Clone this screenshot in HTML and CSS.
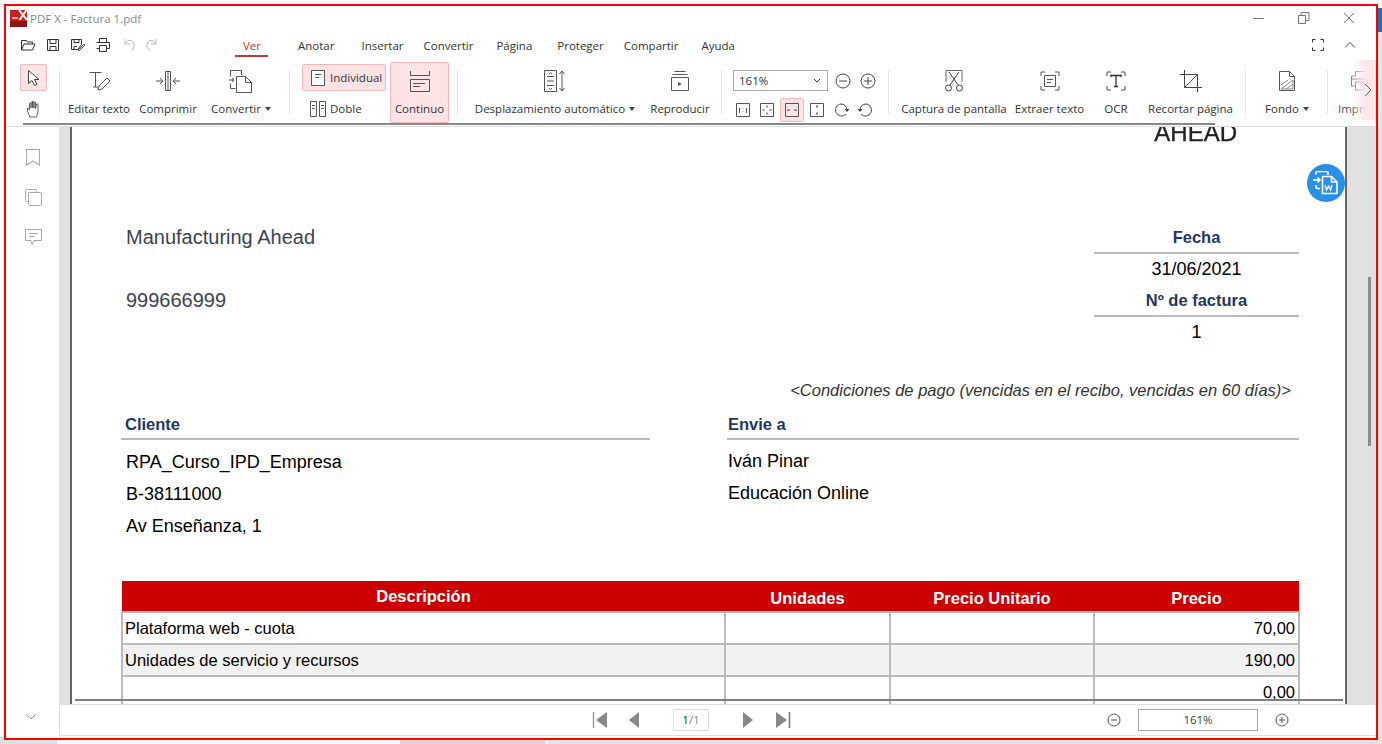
FILE: index.html
```html
<!DOCTYPE html>
<html lang="es">
<head>
  <meta charset="utf-8">
  <title>PDF X - Factura 1.pdf</title>
  <link rel="stylesheet" href="styles.css">
</head>
<body>
  <!-- desktop behind the window -->
  <div class="desk-blue"></div>
  <div class="desk-right"></div>
  <div class="desk-bottom">
    <div class="desk-white"></div>
    <div class="desk-pink"></div>
    <div class="desk-grey"></div>
    <div class="desk-rose"></div>
  </div>

  <div class="window">
    <div class="titlebar">
      <svg class="app-logo" width="17" height="17" viewBox="0 0 17 17">
        <rect width="17" height="17" fill="#c62020"/>
        <rect y="11" width="17" height="6" fill="#8e1212"/>
        <path d="M9 0l8 10M16.500 0l-7 10" stroke="#fff" stroke-width="2" fill="none"/>
        <path d="M2 8h6" stroke="#fff" stroke-width="1.200"/>
      </svg>
      <span class="app-title">PDF X - Factura 1.pdf</span>
      <div class="win-btns">
        <svg width="12" height="12" viewBox="0 0 12 12"><path d="M0 6.500h11" stroke="#777"/></svg>
        <svg width="12" height="12" viewBox="0 0 12 12"><path d="M.5 3.500h7v8h-7zM3 3.500V.5h8v8H7.500" stroke="#777" fill="none"/></svg>
        <svg width="12" height="12" viewBox="0 0 12 12"><path d="M1 1l10 10M11 1L1 11" stroke="#777" fill="none"/></svg>
      </div>
    </div>

    <div class="tabrow">
      <div class="quick">
        <svg width="16" height="16" viewBox="0 0 16 16"><path d="M1.500 13V3.500h5l1 1.500h5v2M1.500 13l2.500-6h11l-2.500 6z" stroke="#333" fill="#fff"/></svg>
        <svg width="16" height="16" viewBox="0 0 16 16"><path d="M2.500 2.500h11v11h-11zM5 2.500v4h6v-4M5 13.500v-4h6v4" stroke="#333" fill="none"/></svg>
        <svg width="16" height="16" viewBox="0 0 16 16"><path d="M1.500 2.500h10v5l-4 5h-6zM4 2.500v3h5v-3M4 12.500v-3h3" stroke="#333" fill="none"/><path d="M8 13l6-6 1 1-6 6z" stroke="#1a6fb5" fill="#e8c27a"/></svg>
        <svg width="16" height="16" viewBox="0 0 16 16"><path d="M4.500 5V1.500h7V5M1.500 5.500h13v6h-3M4.500 11.500h-3M4.500 8.500h7v6h-7z" stroke="#333" fill="none"/></svg>
        <svg width="16" height="16" viewBox="0 0 16 16"><path d="M5 2v5h5M5 7l3-3.500a5 5 0 013 9.500" stroke="#bbb" fill="none"/></svg>
        <svg width="16" height="16" viewBox="0 0 16 16"><path d="M11 2v5H6M11 7L8 3.500a5 5 0 00-3 9.500" stroke="#bbb" fill="none"/></svg>
      </div>
      <nav class="tabs">
        <span class="tab tab-active">Ver</span>
        <span class="tab">Anotar</span>
        <span class="tab">Insertar</span>
        <span class="tab">Convertir</span>
        <span class="tab">Página</span>
        <span class="tab">Proteger</span>
        <span class="tab">Compartir</span>
        <span class="tab">Ayuda</span>
      </nav>
      <div class="tab-end">
        <svg width="14" height="14" viewBox="0 0 14 14"><path d="M1.500 4.500v-3h3M9.500 1.500h3v3M12.500 9.500v3h-3M4.500 12.500h-3v-3" stroke="#333" fill="none"/></svg>
        <svg width="12" height="12" viewBox="0 0 12 12"><path d="M1 8.500l5-5 5 5" stroke="#444" fill="none"/></svg>
      </div>
    </div>

    <div class="toolbar">
      <div class="sel-col">
        <div class="sel-btn on">
          <svg width="16" height="18" viewBox="0 0 16 18"><path d="M2.500 1.500v13l3.500-3 2.500 5 2.500-1-2.500-5h4.500z" stroke="#444" fill="#fff"/></svg>
        </div>
        <div class="sel-btn">
          <svg width="16" height="18" viewBox="0 0 16 18"><path d="M4 17l-2.500-6V8l2 2V3.500h1.500V8 2h1.500v6-6.500H8V8 2.500h1.500V9l1-5H12v8l-1.500 5z" stroke="#555" fill="#fff" stroke-width=".9"/></svg>
        </div>
      </div>
      <div class="sep sep-a"></div>

      <div class="tool t-edit">
        <svg width="24" height="24" viewBox="0 0 24 24"><path d="M2.500 3.500h12M8.500 3.500V18M6 18h5" stroke="#555" fill="none"/><path d="M11 21l1-4 8-8 3 3-8 8z" stroke="#555" fill="#fff"/></svg>
        <span>Editar texto</span>
      </div>
      <div class="tool t-comp">
        <svg width="26" height="24" viewBox="0 0 26 24"><path d="M10.500 2.500h5v19h-5zM13 2.500v19" stroke="#555" fill="none"/><path d="M1 12h7M5 9l3 3-3 3M25 12h-7M21 9l-3 3 3 3" stroke="#555" fill="none"/></svg>
        <span>Comprimir</span>
      </div>
      <div class="tool t-conv">
        <svg width="24" height="24" viewBox="0 0 24 24"><path d="M1.500 7.500v-6h11v5M1.500 14.500v5h5" stroke="#555" fill="none"/><path d="M7.500 7.500h9l6 6v10h-15zM16.500 7.500v6h6M0 11h5M3 9l2 2-2 2" stroke="#555" fill="#fff"/></svg>
        <span>Convertir <i class="caret"></i></span>
      </div>
      <div class="sep sep-b"></div>

      <div class="view-col">
        <div class="view-btn on">
          <svg class="page-one" width="14" height="16" viewBox="0 0 14 16"><path d="M.5.5h13v15H.5zM4 4.500h6M4 7.500h4" stroke="#555" fill="#fff"/></svg>
          <span>Individual</span>
        </div>
        <div class="view-btn">
          <svg width="16" height="16" viewBox="0 0 16 16"><path d="M.5.5h6v15h-6zM9.500.5h6v15h-6zM2 4.500h3M2 7.500h3M11 4.500h3M11 7.500h3" stroke="#555" fill="#fff"/></svg>
          <span>Doble</span>
        </div>
      </div>
      <div class="tool t-cont on">
        <svg width="22" height="22" viewBox="0 0 22 22"><path d="M1.500 0v4.500h19V0M1.500 8.500h19v12h-19zM4 12.500h12M4 15.500h7" stroke="#555" fill="none"/></svg>
        <span>Continuo</span>
      </div>
      <div class="sep sep-c"></div>

      <div class="tool t-auto">
        <svg width="24" height="24" viewBox="0 0 24 24"><path d="M1.500 1.500h12v21h-12zM4 7.500h7M4 12h7M4 16.500h7M6 5l1.500-1.500L9 5M6 19l1.500 1.500L9 19M19 2v20M16.500 5L19 2l2.500 3M16.500 19l2.500 3 2.500-3" stroke="#555" fill="none"/></svg>
        <span>Desplazamiento automático <i class="caret"></i></span>
      </div>
      <div class="tool t-play">
        <svg width="20" height="22" viewBox="0 0 20 22"><path d="M4.500 1.500h11M2.500 4.500h15M1.500 7.500h17v13h-17z" stroke="#555" fill="none"/><path d="M8 12l4 2-4 2z" fill="#555"/></svg>
        <span>Reproducir</span>
      </div>
      <div class="sep sep-d"></div>

      <div class="zoom-col">
        <div class="zoom-top">
          <div class="zoom-select"><span>161%</span>
            <svg width="8" height="6" viewBox="0 0 8 6"><path d="M1 1l3 3 3-3" stroke="#333" fill="none"/></svg>
          </div>
          <svg width="16" height="16" viewBox="0 0 16 16"><circle cx="8" cy="8" r="7" stroke="#444" fill="none"/><path d="M4 8h8" stroke="#444"/></svg>
          <svg width="16" height="16" viewBox="0 0 16 16"><circle cx="8" cy="8" r="7" stroke="#444" fill="none"/><path d="M4 8h8M8 4v8" stroke="#444"/></svg>
        </div>
        <div class="zoom-bottom">
          <div class="mini"><svg width="14" height="14" viewBox="0 0 14 14"><path d="M.5.5h13v13H.5zM3.500 5v5M10.500 5v5M7 5.500v.5M7 8.500v.5" stroke="#555" fill="none"/></svg></div>
          <div class="mini"><svg width="14" height="14" viewBox="0 0 14 14"><path d="M.5.5h13v13H.5z" stroke="#555" fill="none"/><path d="M6 2.500h2v2H6zM2.500 6h2v2h-2zM9.500 6h2v2h-2zM6 9.500h2v2H6z" fill="#999"/></svg></div>
          <div class="mini on"><svg width="14" height="14" viewBox="0 0 14 14"><path d="M.5.5h13v13H.5z" stroke="#555" fill="none"/><path d="M2.500 6h2v2h-2zM9.500 6h2v2h-2z" fill="#777"/></svg></div>
          <div class="mini"><svg width="14" height="14" viewBox="0 0 14 14"><path d="M.5.5h13v13H.5z" stroke="#555" fill="none"/><path d="M6 2.500h2v2H6zM6 9.500h2v2H6z" fill="#777"/></svg></div>
          <div class="mini"><svg width="16" height="16" viewBox="0 0 16 16"><path d="M13 12A6 6 0 118 2a6 6 0 016 6" stroke="#444" fill="none"/><path d="M11.500 7h5L14 10z" fill="#444"/></svg></div>
          <div class="mini"><svg width="16" height="16" viewBox="0 0 16 16"><path d="M3 12a6 6 0 105-10 6 6 0 00-6 6" stroke="#444" fill="none"/><path d="M-.5 7h5L2 10z" fill="#444"/></svg></div>
        </div>
      </div>
      <div class="sep sep-e"></div>

      <div class="tool t-shot">
        <svg width="24" height="24" viewBox="0 0 24 24"><path d="M4 13V1.500h16V13" stroke="#666" fill="none"/><path d="M7 3l9 13M17 3L8 16" stroke="#444" fill="none"/><circle cx="6.500" cy="19" r="3" stroke="#444" fill="#fff"/><circle cx="17.500" cy="19" r="3" stroke="#444" fill="#fff"/></svg>
        <span>Captura de pantalla</span>
      </div>
      <div class="tool t-extr">
        <svg width="20" height="20" viewBox="0 0 20 20"><path d="M1 5V1h4M15 1h4v4M19 15v4h-4M5 19H1v-4" stroke="#555" fill="none"/><path d="M4.500 4.500h11v11h-11zM7 8.500h6M7 11.500h4" stroke="#555" fill="none"/></svg>
        <span>Extraer texto</span>
      </div>
      <div class="tool t-ocr">
        <svg width="20" height="20" viewBox="0 0 20 20"><path d="M1 5V1h4M15 1h4v4M19 15v4h-4M5 19H1v-4" stroke="#555" fill="none"/><path d="M5 6V4.500h10V6M10 4.500V15M8 15.500h4" stroke="#333" stroke-width="1.300" fill="none"/></svg>
        <span>OCR</span>
      </div>
      <div class="tool t-crop">
        <svg width="22" height="22" viewBox="0 0 22 22"><path d="M4.500 0v17.500H22M0 4.500h17.500V22M4.500 17.500l13-13" stroke="#444" fill="none"/></svg>
        <span>Recortar página</span>
      </div>
      <div class="sep sep-f"></div>

      <div class="tool t-back">
        <svg width="18" height="22" viewBox="0 0 18 22"><path d="M1.500 1.500h10l5 5v14h-15zM11.500 1.500v5h5" stroke="#555" fill="none"/><path d="M3 19l12-9M3 15l7-5M8 19l7-5M3 19h12v-9" stroke="#888" fill="none"/></svg>
        <span>Fondo <i class="caret"></i></span>
      </div>
      <div class="sep sep-g"></div>

      <div class="tool t-print">
        <svg width="20" height="22" viewBox="0 0 20 22"><path d="M5.500 6V1.500h10l3 3v4M5.500 6h-4v10h4M1.500 9h14M5.500 12h9v8h-9z" stroke="#888" fill="none"/></svg>
        <span>Imprimir</span>
      </div>
      <div class="fade">
        <svg width="8" height="14" viewBox="0 0 8 14"><path d="M1 1l6 6-6 6" stroke="#666" fill="none"/></svg>
      </div>
    </div>
    <div class="bar-shadow"></div>

    <div class="middle">
      <aside class="side">
        <div class="side-top">
          <svg width="14" height="17" viewBox="0 0 14 17"><path d="M.5.5h13V16L7 12 .5 16z" stroke="#aaa" fill="none" stroke-width="1.200"/></svg>
          <svg width="17" height="17" viewBox="0 0 17 17"><path d="M3.500 12.500h-2a1 1 0 01-1-1v-10a1 1 0 011-1h9a1 1 0 011 1v2" stroke="#aaa" fill="none"/><rect x="3.500" y="3.500" width="13" height="13" rx="1" stroke="#aaa" fill="none"/></svg>
          <svg width="17" height="17" viewBox="0 0 17 17"><path d="M.5.5h16v11H9l-2 4-1-4H.5zM4 4.500h9M4 7.500h6" stroke="#aaa" fill="none"/></svg>
        </div>
        <svg class="side-down" width="12" height="8" viewBox="0 0 12 8"><path d="M1.500 1.500L6 6l4.500-4.500" stroke="#999" fill="none"/></svg>
      </aside>

      <div class="content">
        <div class="viewer">
          <div class="page">
            <div class="logo-word">AHEAD</div>

            <div class="head-row">
              <div class="seller">
                <div class="seller-line">Manufacturing Ahead</div>
                <div class="seller-line">999666999</div>
              </div>
              <div class="meta">
                <div class="meta-label">Fecha</div>
                <div class="meta-value">31/06/2021</div>
                <div class="meta-label meta-label-b">Nº de factura</div>
                <div class="meta-value">1</div>
              </div>
            </div>

            <div class="terms">&lt;Condiciones de pago (vencidas en el recibo, vencidas en 60 días)&gt;</div>

            <div class="parties">
              <div class="party party-left">
                <div class="party-label">Cliente</div>
                <div class="party-line">RPA_Curso_IPD_Empresa</div>
                <div class="party-line">B-38111000</div>
                <div class="party-line">Av Enseñanza, 1</div>
              </div>
              <div class="party party-right">
                <div class="party-label">Envie a</div>
                <div class="party-line">Iván Pinar</div>
                <div class="party-line">Educación Online</div>
              </div>
            </div>

            <table class="items">
              <colgroup>
                <col class="c-desc"><col class="c-units"><col class="c-unit-price"><col class="c-price">
              </colgroup>
              <thead>
                <tr><th class="th-first">Descripción</th><th>Unidades</th><th>Precio Unitario</th><th>Precio</th></tr>
              </thead>
              <tbody>
                <tr><td>Plataforma web - cuota</td><td></td><td></td><td class="num">70,00</td></tr>
                <tr class="alt"><td>Unidades de servicio y recursos</td><td></td><td></td><td class="num">190,00</td></tr>
                <tr><td></td><td></td><td></td><td class="num">0,00</td></tr>
              </tbody>
            </table>
          </div>
          <div class="scroll-thumb"></div>
        </div>
        <div class="page-line"></div>
        <div class="to-word">
          <svg width="26" height="24" viewBox="0 0 26 24"><path d="M3 3.500V2A1.500 1.500 0 014.500.5h9A1.500 1.500 0 0115 2v2M3 14v2a1.500 1.500 0 001.500 1.500H7" stroke="#fff" fill="none" stroke-width="1.600"/><path d="M0 9h7M4.500 6.500L7 9l-2.500 2.500" stroke="#fff" fill="none" stroke-width="1.600"/><path d="M9.500 5.500h9L24 11v11.500H9.500zM18.500 5.500V11H24" stroke="#fff" fill="#2a8fe8" stroke-width="1.600"/><path d="M12 14l1.500 5 2-4 2 4 1.500-5" stroke="#fff" fill="none" stroke-width="1.300"/></svg>
        </div>
        <div class="status">
          <div class="pager">
            <svg width="16" height="16" viewBox="0 0 16 16"><path d="M1.500 0v16" stroke="#999" stroke-width="1.500"/><path d="M15 0v16L4 8z" fill="#888"/></svg>
            <svg class="pg-prev" width="12" height="16" viewBox="0 0 12 16"><path d="M11 0v16L1 8z" fill="#888"/></svg>
            <div class="page-box"><span class="pg-cur">1</span>/1</div>
            <svg width="12" height="16" viewBox="0 0 12 16"><path d="M1 0v16l10-8z" fill="#888"/></svg>
            <svg class="pg-last" width="16" height="16" viewBox="0 0 16 16"><path d="M1 0v16l11-8z" fill="#888"/><path d="M14.500 0v16" stroke="#777" stroke-width="1.500"/></svg>
          </div>
          <div class="zoomer">
            <svg width="14" height="14" viewBox="0 0 14 14"><circle cx="7" cy="7" r="6" stroke="#555" fill="none"/><path d="M4 7h6" stroke="#555"/></svg>
            <div class="zoom-box">161%</div>
            <svg width="14" height="14" viewBox="0 0 14 14"><circle cx="7" cy="7" r="6" stroke="#555" fill="none"/><path d="M4 7h6M7 4v6" stroke="#555"/></svg>
          </div>
        </div>
      </div>
    </div>
  </div>
</body>
</html>
```

FILE: styles.css
```css
html, body {
    margin: 0;
    padding: 0;
    height: 744px;
    overflow: hidden;
    background: #fff;
    font-family: "Open Sans", sans-serif;
}

svg {
    display: block;
    flex: none;
}

/* desktop behind the window */
.desk-blue {
    position: absolute;
    left: 1374px;
    top: 8px;
    width: 8px;
    height: 24px;
    background: #1f6fc4;
}

.desk-right {
    position: absolute;
    left: 1378px;
    top: 32px;
    width: 4px;
    height: 712px;
    background: #e6e6e6;
}

.desk-bottom {
    position: absolute;
    left: 0;
    top: 737px;
    width: 1382px;
    height: 7px;
    display: flex;
    background: #e0e0e0;
}

.desk-white {
    margin-left: 57px;
    width: 343px;
    background: #fff;
}

.desk-pink {
    width: 145px;
    background: #e9d0d0;
}

.desk-grey {
    width: 4px;
    background: #eee;
}

.desk-rose {
    flex: 1;
    background: #ebe0e0;
}

/* window */
.window {
    position: absolute;
    left: 4px;
    top: 4px;
    width: 1370px;
    height: 732px;
    border: 2px solid #f00;
    background: #fff;
    display: flex;
    flex-direction: column;
    overflow: hidden;
    color: #333;
    font-size: 11.5px;
}

.titlebar {
    height: 24px;
    display: flex;
    align-items: center;
    padding-left: 4px;
}

.app-logo {
    margin-right: 3px;
}

.app-title {
    color: #8a8a8a;
}

.win-btns {
    margin-left: auto;
    display: flex;
    gap: 33px;
    padding-right: 21px;
}

.tabrow {
    height: 30px;
    display: flex;
    align-items: center;
}

.quick {
    display: flex;
    gap: 9px;
    margin-left: 14px;
    width: 214px;
}

.tabs {
    display: flex;
    align-items: center;
    padding-top: 2px;
}

.tab {
    position: relative;
    line-height: 22px;
    white-space: nowrap;
}

.tab-active {
    color: #c0392b;
    margin-left: 9px;
    margin-right: 37px;
}

.tab:nth-child(2) { margin-right: 27px; }
.tab:nth-child(3) { margin-right: 20px; }
.tab:nth-child(4) { margin-right: 23px; }
.tab:nth-child(5) { margin-right: 25px; }
.tab:nth-child(6) { margin-right: 20px; }
.tab:nth-child(7) { margin-right: 23px; }

.tab-active::after {
    content: "";
    position: absolute;
    left: -8px;
    right: -7px;
    bottom: 0;
    height: 2px;
    background: #c4383a;
}

.tab-end {
    margin-left: auto;
    display: flex;
    align-items: center;
    gap: 19px;
    padding-right: 20px;
}

/* ribbon */
.toolbar {
    position: relative;
    height: 63px;
    display: flex;
    padding-left: 14px;
    overflow: hidden;
}

.on {
    background: #fde3e3;
    border: 1px solid #f6b9b9;
    border-radius: 2px;
}

.sel-col {
    width: 27px;
    flex: none;
    display: flex;
    flex-direction: column;
}

.sel-btn {
    box-sizing: border-box;
    height: 27px;
    margin-top: 4px;
    display: flex;
    align-items: center;
    justify-content: center;
}

.sep {
    width: 1px;
    height: 44px;
    margin-top: 10px;
    background: #e4e4e4;
    flex: none;
}

.sep-a { margin-left: 12px; }
.sep-b { margin-left: 9px; }
.sep-c { margin-left: 8px; }
.sep-d { margin-left: 3px; }
.sep-e { margin-left: 10px; }
.sep-f { margin-left: 6px; }
.sep-g { margin-left: 5px; }

.tool {
    box-sizing: border-box;
    flex: none;
    height: 61px;
    margin-top: 2px;
    padding-top: 7px;
    display: flex;
    flex-direction: column;
    align-items: center;
    white-space: nowrap;
    position: relative;
}

.tool svg {
    height: 24px;
}

.tool span {
    position: absolute;
    left: 0;
    right: 0;
    top: 39px;
    text-align: center;
    line-height: 16px;
}

.t-edit { width: 70px; margin-left: 4px; }
.t-comp { width: 68px; }
.t-conv { width: 78px; }
.t-cont { width: 59px; margin-left: 4px; }
.t-auto { width: 174px; margin-left: 10px; }
.t-play { width: 76px; }
.t-shot { width: 110px; margin-left: 10px; }
.t-extr { width: 81px; }
.t-ocr { width: 52px; }
.t-crop { width: 97px; }
.t-back { width: 70px; margin-left: 6px; }

.t-cont span {
    top: 38px;
}

.t-print {
    width: 60px;
    margin-left: 10px;
    padding-left: 12px;
    align-items: flex-start;
    color: #555;
}

.t-print span {
    text-align: left;
}

.caret {
    display: inline-block;
    width: 0;
    height: 0;
    margin-left: 1px;
    vertical-align: 2px;
    border-left: 3.5px solid transparent;
    border-right: 3.5px solid transparent;
    border-top: 4px solid #444;
}

.view-col {
    width: 84px;
    margin-left: 12px;
    flex: none;
}

.view-btn {
    box-sizing: border-box;
    height: 27px;
    margin-top: 4px;
    padding-left: 7px;
    border: 1px solid transparent;
    display: flex;
    align-items: center;
    gap: 4px;
}

.view-btn.on {
    border-color: #f6b9b9;
}

.page-one {
    margin: 0 1px;
}

.zoom-col {
    width: 145px;
    margin-left: 11px;
    flex: none;
}

.zoom-top {
    display: flex;
    align-items: center;
    gap: 9px;
    margin-top: 10px;
}

.zoom-select {
    box-sizing: border-box;
    width: 95px;
    height: 21px;
    border: 1px solid #aaa;
    display: flex;
    align-items: center;
    justify-content: space-between;
    padding: 0 6px 0 5px;
    margin-right: -2px;
}

.zoom-bottom {
    display: flex;
    align-items: center;
    gap: 1px;
    margin: 7px 0 0 -2px;
}

.mini {
    box-sizing: border-box;
    width: 24px;
    height: 24px;
    display: flex;
    align-items: center;
    justify-content: center;
}

.fade {
    position: absolute;
    right: 0;
    top: 0;
    width: 20px;
    height: 60px;
    background: linear-gradient(to right, rgba(253, 230, 230, 0), #fde6e6 60%);
    display: flex;
    align-items: center;
    justify-content: flex-end;
    padding-right: 4px;
}

.bar-shadow {
    height: 3px;
    border-bottom: 1px solid #ddd;
    background: linear-gradient(to right, #888, #888) no-repeat 17px 0 / 1192px 2px;
}

/* main area */
.middle {
    flex: 1;
    display: flex;
    min-height: 0;
}

.side {
    width: 53px;
    flex: none;
    display: flex;
    flex-direction: column;
    align-items: center;
}

.side-top {
    display: flex;
    flex-direction: column;
    align-items: center;
    gap: 23px;
    margin-top: 22px;
    margin-left: 1px;
}

.side-down {
    margin: auto 3px 17px 0;
}

.content {
    flex: 1;
    position: relative;
    display: flex;
    flex-direction: column;
    min-width: 0;
}

.viewer {
    flex: 1;
    min-height: 0;
    overflow: hidden;
    background: #e1e1e1;
    padding: 0 29px 0 11px;
    position: relative;
}

.scroll-thumb {
    position: absolute;
    right: 5px;
    top: 150px;
    width: 3px;
    height: 169px;
    background: #8d8d8d;
}

.page-line {
    position: absolute;
    left: 16px;
    right: 33px;
    top: 572px;
    height: 2px;
    background: #808080;
}

.to-word {
    position: absolute;
    left: 1248px;
    top: 37px;
    width: 38px;
    height: 38px;
    border-radius: 50%;
    background: #2a8fe8;
    display: flex;
    align-items: center;
    justify-content: center;
}

.status {
    height: 32px;
    flex: none;
    margin-bottom: 2px;
    box-sizing: border-box;
    background: #fff;
    border-top: 1px solid #e0e0e0;
    border-left: 1px solid #e0e0e0;
    border-bottom: 1px solid #e0e0e0;
    display: flex;
    align-items: center;
}

.pager {
    display: flex;
    align-items: center;
    margin-left: 532px;
}

.pg-prev {
    margin: 0 33px 0 20px;
}

.pg-last {
    margin-left: 21px;
}

.page-box {
    box-sizing: border-box;
    width: 36px;
    height: 22px;
    margin-right: 33px;
    border: 1px solid #ddd;
    color: #888;
    text-align: center;
    line-height: 20px;
}

.pg-cur {
    color: #333;
}

.zoomer {
    margin-left: auto;
    display: flex;
    align-items: center;
    gap: 17px;
    padding-right: 87px;
}

.zoom-box {
    box-sizing: border-box;
    width: 120px;
    height: 22px;
    border: 1px solid #aaa;
    text-align: center;
    line-height: 20px;
    color: #444;
}

/* pdf page */
.page {
    box-sizing: border-box;
    height: 600px;
    background: #fff;
    border-left: 2px solid #666;
    border-right: 2px solid #666;
    padding: 0 46px 0 50px;
    font-family: "Liberation Sans", Arial, sans-serif;
    color: #000;
}

.logo-word {
    margin: -6px 62px 0 0;
    height: 24px;
    line-height: 24px;
    text-align: right;
    font-size: 24px;
    color: #222;
    -webkit-text-stroke: .3px #222;
    filter: blur(.4px);
}

.head-row {
    display: flex;
    justify-content: space-between;
    margin-top: 78px;
}

.seller {
    margin-left: 4px;
}

.seller-line {
    font-size: 20px;
    line-height: 28px;
    height: 63px;
    color: #3b4452;
}

.meta {
    width: 205px;
    text-align: center;
}

.meta-label {
    font-size: 16.5px;
    font-weight: bold;
    color: #1f3864;
    line-height: 29px;
    border-bottom: 2px solid #bbb;
}

.meta-label-b {
    line-height: 30px;
}

.meta-value {
    font-size: 18px;
    line-height: 31px;
}

.terms {
    margin: 28px 8px 0 0;
    text-align: right;
    font-size: 16.5px;
    font-style: italic;
    color: #333;
    line-height: 26px;
}

.parties {
    display: flex;
    justify-content: space-between;
    margin-top: 8px;
}

.party-left {
    width: 529px;
    margin-left: -1px;
}

.party-right {
    width: 572px;
}

.party-label {
    font-size: 16.5px;
    font-weight: bold;
    color: #1f3864;
    line-height: 27px;
    padding-left: 4px;
    border-bottom: 2px solid #bbb;
}

.party-right .party-label {
    padding-left: 1px;
    margin-bottom: 5px;
}

.party-left .party-label {
    margin-bottom: 6px;
}

.party-line {
    font-size: 18px;
    line-height: 32px;
    padding-left: 5px;
}

.party-right .party-line {
    padding-left: 1px;
}

.items {
    width: 1177px;
    margin: 39px 0 0 -1px;
    border-collapse: collapse;
    table-layout: fixed;
}

.c-desc { width: 603px; }
.c-units { width: 165px; }
.c-unit-price { width: 204px; }
.c-price { width: 205px; }

.items th {
    background: #c00;
    color: #fff;
    font-size: 16.5px;
    height: 31px;
    padding: 5px 0 0;
    box-sizing: border-box;
}

.items .th-first {
    padding: 1px 0 0;
}

.items td {
    border: 2px solid #bbb;
    height: 30px;
    padding: 0 2px;
    font-size: 16.5px;
    box-sizing: content-box;
}

.items .alt td {
    background: #f2f2f2;
}

.items .num {
    text-align: right;
    padding-right: 3px;
}
```
